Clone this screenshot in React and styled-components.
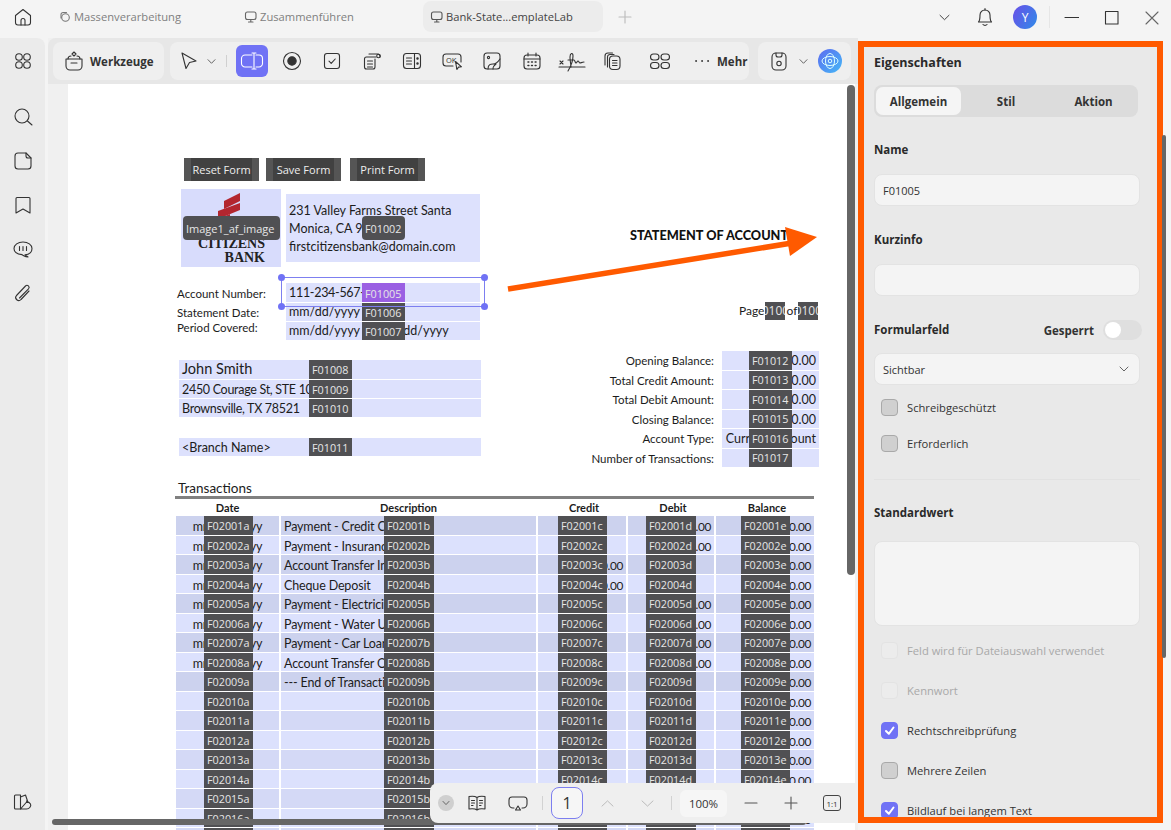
import React from "react";
import styled, { createGlobalStyle } from "styled-components";

const GlobalStyle = createGlobalStyle`
  html, body { margin: 0; padding: 0; background: #f4f4f4; }
  * { box-sizing: border-box; }
`;

const uiFont = `"Open Sans", "Noto Sans", sans-serif`;
const docFont = `Lato, "Noto Sans", sans-serif`;

const Window = styled.div`
  width: 1171px;
  height: 830px;
  display: flex;
  flex-direction: column;
  overflow: hidden;
  background: #f4f4f4;
  font-family: ${uiFont};
  color: #333;
`;

const TopBar = styled.header`
  height: 38px;
  flex: none;
  display: flex;
  align-items: flex-start;
`;

const HomeSlot = styled.div`
  width: 45px;
  height: 34px;
  display: flex;
  align-items: center;
  justify-content: center;
`;

const Tab = styled.div`
  width: ${(p) => p.$w}px;
  height: 31px;
  margin-top: 1px;
  margin-left: ${(p) => p.$ml || 0}px;
  padding-left: 7px;
  display: flex;
  align-items: center;
  gap: 3px;
  border-radius: 8px;
  font-size: 11.2px;
  color: ${(p) => (p.$active ? "#444" : "#808080")};
  background: ${(p) => (p.$active ? "#ececec" : "transparent")};
`;

const TopRight = styled.div`
  height: 34px;
  flex: 1;
  display: flex;
  align-items: center;
  position: relative;
`;

const TopIcon = styled.div`
  margin-left: ${(p) => p.$ml}px;
  display: flex;
  align-items: center;
`;

const Avatar = styled.div`
  width: 24px;
  height: 24px;
  margin-left: ${(p) => p.$ml}px;
  border-radius: 50%;
  display: flex;
  align-items: center;
  justify-content: center;
  color: #fff;
  font-size: 12px;
  background: linear-gradient(120deg, #6a4fe8, #2f8be8);
`;

const TopDivider = styled.div`
  width: 1px;
  height: 22px;
  margin-left: 12px;
  background: #e6e6e6;
`;

const Body = styled.div`
  flex: 1;
  min-height: 0;
  display: flex;
`;

const Sidebar = styled.nav`
  width: 45px;
  flex: none;
  border-top-right-radius: 8px;
  background: #ebebeb;
  display: flex;
  flex-direction: column;
  align-items: center;
  padding: 13px 0 18px;
`;

const SideIcon = styled.div`
  height: 20px;
  margin-bottom: ${(p) => p.$mb || 24}px;
  display: flex;
  align-items: center;
  &:last-child {
    margin-top: auto;
    margin-bottom: 0;
  }
`;

const Main = styled.main`
  width: 810px;
  margin-left: 3px;
  flex: none;
  position: relative;
  display: flex;
  flex-direction: column;
  background: #f0f0f0;
  overflow: hidden;
`;

const ToolRow = styled.div`
  height: 46px;
  flex: none;
  padding: 4px 0 4px 5px;
  display: flex;
  gap: 6px;
  background: #e7e7e7;
  border-top-left-radius: 8px;
`;

const ToolGroup = styled.div`
  width: ${(p) => p.$w}px;
  margin-left: ${(p) => p.$ml || 0}px;
  height: 38px;
  flex: none;
  display: flex;
  align-items: center;
  border-radius: 8px;
  background: #efefef;
  position: relative;
`;

const ToolLabel = styled.span`
  font-size: 11.5px;
  font-weight: 700;
  color: #333;
  white-space: nowrap;
`;

const ToolButton = styled.div`
  width: 32px;
  height: 32px;
  flex: none;
  margin-left: ${(p) => p.$ml}px;
  display: flex;
  align-items: center;
  justify-content: center;
  border-radius: 6px;
  background: ${(p) => (p.$active ? "#7072f5" : "transparent")};
`;

const ToolDivider = styled.div`
  width: 1px;
  height: 12px;
  margin-left: ${(p) => p.$ml}px;
  background: #d0d0d0;
`;

const PageArea = styled.div`
  flex: 1;
  min-height: 0;
  padding-left: 20px;
  padding-right: 3px;
`;

const Page = styled.div`
  height: 100%;
  padding: 74px 0 0 108px;
  background: #fff;
  font-family: ${docFont};
  font-size: 12.5px;
  color: #1c1c1c;
  overflow: hidden;
  position: relative;
`;

const FormButtons = styled.div`
  display: flex;
  margin-left: 8px;
`;

const FormButton = styled.div`
  width: 75px;
  height: 23px;
  margin-right: ${(p) => p.$mr}px;
  display: flex;
  align-items: center;
  justify-content: center;
  background: linear-gradient(90deg, #555 0 7px, #414141 7px 68px, #555 68px);
  color: #eee;
  font-family: ${uiFont};
  font-size: 11px;
`;

const HeaderRow = styled.div`
  display: flex;
  margin: 8px 0 0 5px;
  height: 78px;
`;

const Field = styled.div`
  background: #dde1fd;
  position: relative;
  white-space: nowrap;
  letter-spacing: ${(p) => (p.$tight ? "-0.3px" : "normal")};
`;

const LogoField = styled(Field)`
  width: 100px;
  height: 78px;
  flex: none;
  display: flex;
  flex-direction: column;
  align-items: flex-end;
  padding: 3px 0 0;
  background: #d8dcfc;
`;

const LogoMark = styled.svg`
  position: absolute;
  left: 29px;
  top: 3px;
`;

const LogoText = styled.div`
  font-family: "Liberation Serif", serif;
  font-weight: 700;
  font-size: ${(p) => p.$size}px;
  line-height: 14px;
  color: #222;
  margin-top: ${(p) => p.$mt || 0}px;
  padding-right: ${(p) => p.$pr}px;
`;

const AddressField = styled(Field)`
  width: 194px;
  height: 68px;
  margin: 5px 0 0 5px;
  padding: 8px 0 0 3px;
  line-height: 18px;
`;

const StatementTitle = styled.div`
  margin: 38px 0 0 150px;
  font-size: 12.7px;
  line-height: 16px;
  font-weight: 900;
  color: #111;
  white-space: nowrap;
`;

const AccountRow = styled.div`
  margin-top: 16px;
  display: flex;
`;

const AccountLabels = styled.div`
  width: 110px;
  padding-left: 1px;
  display: grid;
  grid-template-rows: 20px 19px 18px;
  font-size: 11.5px;
  align-items: center;
`;

const AccountLabel = styled.div`
  margin-top: ${(p) => p.$mt || 0}px;
`;

const AccountFields = styled.div`
  width: 194px;
  display: flex;
  flex-direction: column;
  gap: 1px;
  position: relative;
`;

const AccountField = styled(Field)`
  height: ${(p) => p.$h}px;
  line-height: ${(p) => p.$h}px;
  padding-left: 3px;
`;

const Tag = styled.div`
  position: absolute;
  left: ${(p) => p.$left}px;
  top: ${(p) => p.$top ?? 0}px;
  bottom: ${(p) => (p.$tall ? "auto" : "0")};
  width: ${(p) => p.$w || 43}px;
  height: ${(p) => (p.$tall ? `${p.$tall}px` : "auto")};
  padding: 1px 0 0 3px;
  display: flex;
  align-items: center;
  overflow: hidden;
  font-family: ${uiFont};
  font-size: ${(p) => p.$size || 10.8}px;
  letter-spacing: normal;
  color: #e6e6e6;
  background: ${(p) => (p.$selected ? "#9a5fe3" : "#505053")};
  border-radius: ${(p) => p.$radius || 0}px;
`;

const SelectionBox = styled.div`
  position: absolute;
  left: -5px;
  top: -6px;
  width: 204px;
  height: 30px;
  border: 1.5px solid #7d7ff0;
  pointer-events: none;
`;

const Handle = styled.span`
  position: absolute;
  width: 7px;
  height: 7px;
  border-radius: 50%;
  background: #7072f5;
  left: ${(p) => (p.$right ? "auto" : "-4px")};
  right: ${(p) => (p.$right ? "-4px" : "auto")};
  top: ${(p) => (p.$bottom ? "auto" : "-4px")};
  bottom: ${(p) => (p.$bottom ? "-4px" : "auto")};
`;

const PageInfo = styled.div`
  margin: 19px 0 0 259px;
  height: 18px;
  display: flex;
  align-items: center;
  font-size: 12px;
  line-height: 18px;
`;

const PageNumber = styled.div`
  width: 20px;
  height: 18px;
  margin: 0 1px;
  background: #505053;
  color: #e6e6e6;
  overflow: hidden;
  display: flex;
  justify-content: center;
  font-family: ${uiFont};
  font-size: 12px;
`;

const SummaryRow = styled.div`
  margin-top: 11px;
  display: flex;
`;

const CustomerBlock = styled.div`
  width: 302px;
  margin: 9px 0 0 3px;
  flex: none;
`;

const CustomerField = styled(Field)`
  height: ${(p) => p.$h || 19}px;
  line-height: ${(p) => p.$lh || (p.$h || 19) + 1}px;
  margin-top: ${(p) => p.$mt || 0}px;
  margin-bottom: 1px;
  padding-left: 3px;
  font-size: ${(p) => p.$size || 12.5}px;
`;

const BalanceBlock = styled.div`
  flex: 1;
  display: flex;
  flex-direction: column;
`;

const BalanceRow = styled.div`
  height: 19.5px;
  display: flex;
`;

const BalanceLabel = styled.div`
  width: 233px;
  line-height: 19px;
  font-size: 11.5px;
  text-align: right;
`;

const BalanceValue = styled(Field)`
  width: 97px;
  height: 18.5px;
  margin-left: 8px;
  line-height: 20.5px;
  padding-right: 3px;
  text-align: right;
`;

const TableTitle = styled.div`
  margin: 13px 0 0 2px;
  font-size: 13.5px;
  line-height: 15px;
`;

const TableRule = styled.div`
  width: 639px;
  height: 3px;
  margin-left: -1px;
  background: #808080;
`;

const TableHead = styled.div`
  height: 17px;
  padding-left: ${(p) => p.$shift}px;
  font-size: 11px;
  font-weight: 700;
  line-height: 17px;
  text-align: center;
`;

const TableGrid = styled.div`
  width: 638px;
  display: grid;
  grid-template-columns: 103px 255px 88px 86px 98px;
  column-gap: 2px;
`;

const shades = ["#dce1fd", "#ccd2ee", "#d4d9f6"];

const Cell = styled.div`
  height: 19.5px;
  line-height: 21px;
  border-bottom: 1px solid #fff;
  position: relative;
  white-space: nowrap;
  padding: 0 3px;
  font-size: ${(p) => (p.$align === "right" ? 11.8 : 12.5)}px;
  letter-spacing: ${(p) => (p.$align === "right" ? -0.3 : -0.15)}px;
  text-align: ${(p) => p.$align || "left"};
  background: ${(p) => shades[p.$shade]};
`;

const VerticalScroll = styled.div`
  position: absolute;
  left: 799px;
  top: 47px;
  width: 8px;
  height: 490px;
  border-radius: 4px;
  background: #666;
`;

const HorizontalScroll = styled.div`
  position: absolute;
  left: 4px;
  bottom: 5px;
  width: 754px;
  height: 6px;
  border-radius: 3px;
  background: #666;
`;

const ZoomBar = styled.div`
  position: absolute;
  left: 382px;
  bottom: 7px;
  width: 428px;
  height: 40px;
  display: flex;
  align-items: center;
  background: #efefef;
  border-radius: 8px 0 0 8px;
  font-size: 12px;
`;

const ZoomItem = styled.div`
  width: ${(p) => p.$w || 20}px;
  margin-left: ${(p) => p.$ml}px;
  flex: none;
  display: flex;
  align-items: center;
  justify-content: center;
`;

const CircleButton = styled(ZoomItem)`
  height: 16px;
  border-radius: 50%;
  background: #cfcfcf;
`;

const PageInput = styled(ZoomItem)`
  height: 32px;
  border: 1px solid #7d7ff0;
  border-radius: 8px;
  background: #f6f6f6;
  font-size: 16px;
`;

const ZoomValue = styled(ZoomItem)`
  height: 27px;
  border-radius: 6px;
  background: #f6f6f6;
  font-size: 11.5px;
`;

const RatioButton = styled(ZoomItem)`
  height: 16px;
  border: 1px solid #444;
  border-radius: 3px;
  font-size: 8px;
`;

const Separator = styled.div`
  width: 1px;
  height: 14px;
  margin-left: ${(p) => p.$ml}px;
  flex: none;
  background: #d2d2d2;
`;

const Arrow = styled.svg`
  position: absolute;
  left: 412px;
  top: 190px;
  overflow: visible;
  pointer-events: none;
`;

const PanelSlot = styled.aside`
  flex: 1;
  position: relative;
  padding-top: 3px;
  background: #f4f4f4;
`;

const Panel = styled.div`
  width: 305px;
  height: 782px;
  border: 6px solid #ff5a00;
  background: #e9e9e9;
  overflow: hidden;
  padding: 0 16px 0 10px;
`;

const PanelScroll = styled.div`
  position: absolute;
  left: 304px;
  top: 97px;
  width: 4px;
  height: 523px;
  background: #666;
  border-radius: 2px;
`;

const PanelTitle = styled.h2`
  margin: 7px 0 0;
  font-size: 12.5px;
  line-height: 17px;
  font-weight: 700;
  color: #2a2a2a;
`;

const Tabs = styled.div`
  width: 264px;
  height: 32px;
  margin-top: 14px;
  padding: 2px;
  display: grid;
  grid-template-columns: 85px 90px 85px;
  border-radius: 8px;
  background: #dcdcdc;
`;

const TabItem = styled.div`
  display: flex;
  align-items: center;
  justify-content: center;
  font-size: 11.5px;
  font-weight: 700;
  border-radius: 7px;
  background: ${(p) => (p.$active ? "#f5f5f5" : "transparent")};
`;

const FieldLabel = styled.div`
  margin-top: ${(p) => p.$mt}px;
  font-size: 11.5px;
  line-height: 16px;
  font-weight: 700;
  color: #2a2a2a;
`;

const InputBox = styled.div`
  width: 266px;
  height: ${(p) => p.$h || 32}px;
  margin-top: ${(p) => p.$mt}px;
  padding: 0 10px 0 8px;
  display: flex;
  align-items: center;
  justify-content: space-between;
  font-size: 11px;
  background: #f4f4f4;
  border: 1px solid #e3e3e3;
  border-radius: 8px;
`;

const FormHead = styled.div`
  width: 268px;
  margin-top: 24px;
  height: 20px;
  display: flex;
  align-items: center;
`;

const LockLabel = styled.span`
  margin-left: auto;
  margin-right: 9px;
  font-size: 11.5px;
  font-weight: 700;
`;

const Toggle = styled.div`
  width: 39px;
  height: 20px;
  padding: 2px;
  border-radius: 10px;
  background: #dfdfdf;
`;

const Knob = styled.div`
  width: 16px;
  height: 16px;
  border-radius: 50%;
  background: #fff;
`;

const CheckRow = styled.div`
  height: 18px;
  margin-top: ${(p) => p.$mt}px;
  padding-left: 7px;
  display: flex;
  align-items: center;
  gap: 9px;
  font-size: 11.2px;
  white-space: nowrap;
  color: ${(p) => (p.$disabled ? "#a8a8a8" : "#333")};
`;

const Box = styled.span`
  width: 17px;
  height: 17px;
  flex: none;
  display: flex;
  align-items: center;
  justify-content: center;
  border-radius: 4px;
  border: 1px solid ${(p) => (p.$checked ? "#7072f5" : p.$disabled ? "#e3e3e3" : "#a9a9a9")};
  background: ${(p) => (p.$checked ? "#7072f5" : p.$disabled ? "#ececec" : "#d0d0d0")};
`;

const Divider = styled.div`
  width: 266px;
  height: 1px;
  margin-top: 27px;
  background: #e2e2e2;
`;

const Icon = ({ size = 20, w, h, color = "#333", sw = 1.1, children }) => (
  <svg
    width={w || size}
    height={h || size}
    viewBox={`0 0 ${w || size} ${h || size}`}
    fill="none"
    stroke={color}
    strokeWidth={sw}
    strokeLinecap="round"
    strokeLinejoin="round"
  >
    {children}
  </svg>
);

const Chevron = ({ up, size = 9, color = "#666" }) => (
  <Icon size={size} color={color} sw={1}>
    <path
      d={
        up
          ? `M1 ${size * 0.7}L${size / 2} ${size * 0.3}L${size - 1} ${size * 0.7}`
          : `M1 ${size * 0.3}L${size / 2} ${size * 0.7}L${size - 1} ${size * 0.3}`
      }
    />
  </Icon>
);

const GridIcon = ({ wide }) => (
  <Icon w={wide ? 22 : 18} h={18}>
    {wide ? (
      <>
        <rect x="1.5" y="2" width="8.5" height="6" rx="3" />
        <rect x="12" y="2" width="8.5" height="6" rx="3" />
        <rect x="1.5" y="10.5" width="8.5" height="6" rx="3" />
        <rect x="12" y="10.5" width="8.5" height="6" rx="3" />
      </>
    ) : (
      <>
        <circle cx="5" cy="5" r="3.3" />
        <circle cx="13" cy="5" r="3.3" />
        <circle cx="5" cy="13" r="3.3" />
        <circle cx="13" cy="13" r="3.3" />
      </>
    )}
  </Icon>
);

const toolIcons = [
  {
    ml: 8,
    node: (
      <Icon>
        <circle cx="10" cy="10" r="8.5" />
        <circle cx="10" cy="10" r="4.2" fill="#333" />
      </Icon>
    ),
  },
  {
    ml: 8,
    node: (
      <Icon>
        <rect x="2.5" y="2.5" width="15" height="15" rx="2.5" />
        <path d="M7 10.2l2.2 2.2L13.2 8" />
      </Icon>
    ),
  },
  {
    ml: 8,
    node: (
      <Icon>
        <path d="M14 6H4.5A2 2 0 0 0 2.5 8v8a2 2 0 0 0 2 2H11a2 2 0 0 0 2-2V8" />
        <path d="M7 3h9a2.5 2.5 0 0 1 2 3" />
        <circle cx="16.5" cy="5" r="1.8" />
        <path d="M5.5 10h5M5.5 13h5M5.5 16h5" />
      </Icon>
    ),
  },
  {
    ml: 8,
    node: (
      <Icon>
        <rect x="1.5" y="2.5" width="17" height="15" rx="3" />
        <path d="M12.5 2.5v15M4.5 7h5M4.5 10h5M4.5 13h5" />
        <circle cx="15.5" cy="7.5" r=".7" fill="#333" />
        <circle cx="15.5" cy="12.5" r=".7" fill="#333" />
      </Icon>
    ),
  },
  {
    ml: 8,
    node: (
      <Icon>
        <path d="M11 15H4a3 3 0 0 1-3-3V6a3 3 0 0 1 3-3h12a3 3 0 0 1 3 3v5" />
        <path d="M13.5 10.5l1.4 8 1.6-2.4 3-.3z" />
        <text x="4" y="11.5" fontSize="7.5" fontFamily="Open Sans" stroke="none" fill="#333">
          OK
        </text>
      </Icon>
    ),
  },
  {
    ml: 8,
    node: (
      <Icon>
        <rect x="2" y="2" width="16" height="16" rx="3" />
        <circle cx="6.5" cy="6.5" r="1.1" />
        <path d="M6 18c0-5 3-5 5-5 3 0 5-2 7-5M11 18c0-2 1.5-4 3-5" />
      </Icon>
    ),
  },
  {
    ml: 8,
    node: (
      <Icon>
        <rect x="2" y="4" width="16" height="14" rx="3" />
        <path d="M2 8h16M6 2v3M14 2v3" />
        <path d="M6 11h.8M9.6 11h.8M13.2 11h.8M6 14.5h.8M9.6 14.5h.8M13.2 14.5h.8" strokeWidth="1.6" />
      </Icon>
    ),
  },
  {
    ml: 8,
    node: (
      <Icon w={28} h={22}>
        <path d="M1 17h26" />
        <path d="M2 11l3 3M5 11l-3 3" />
        <path d="M10 21c3-5 5-11 5-15 0-4-3-3-3 1 0 3 1 9 1 10" />
        <path d="M10 10h6c1 0 1 3 2 3s1-2 2-2 1 2 2 2 2-1 4-1" />
      </Icon>
    ),
  },
  {
    ml: 8,
    node: (
      <Icon>
        <path d="M3 14V5a3 3 0 0 1 3-3h4.5" />
        <path d="M5.5 16V6A2.5 2.5 0 0 1 8 3.5h4" />
        <rect x="7.5" y="5" width="10.5" height="13.5" rx="3.5" />
        <path d="M10.5 9.5H15M10.5 12H15M10.5 14.5H15" />
      </Icon>
    ),
  },
  { ml: 16, node: <GridIcon wide /> },
];

const accountRows = [
  { h: 19, text: "111-234-567-890", tag: "F01005", selected: true, tight: true },
  { h: 18, text: "mm/dd/yyyy", tag: "F01006" },
  { h: 18, text: "mm/dd/yyyy to mm/dd/yyyy", tag: "F01007" },
];

const balances = [
  ["Opening Balance:", "1,000.00", "F01012"],
  ["Total Credit Amount:", "1,000.00", "F01013"],
  ["Total Debit Amount:", "1,000.00", "F01014"],
  ["Closing Balance:", "1,000.00", "F01015"],
  ["Account Type:", "Current Account", "F01016"],
  ["Number of Transactions:", "", "F01017"],
];

const descriptions = [
  "Payment - Credit Card",
  "Payment - Insurance",
  "Account Transfer In",
  "Cheque Deposit",
  "Payment - Electricity",
  "Payment - Water Utility",
  "Payment - Car Loan",
  "Account Transfer Out",
  "--- End of Transactions",
];

const tableHeads = [
  ["Date", 0],
  ["Description", 0],
  ["Credit", 4],
  ["Debit", 4],
  ["Balance", 4],
];

const rows = Array.from({ length: 17 }, (_, i) => {
  const used = i < 8;
  const inbound = i === 2 || i === 3;
  return {
    id: String(i + 1).padStart(2, "0"),
    shade: i % 2 === 1 ? 0 : i < 9 ? 1 : 2,
    date: used ? "mm/dd/yyyy" : "",
    desc: descriptions[i] || "",
    credit: inbound ? "1,000.00" : "",
    debit: used && !inbound ? "1,000.00" : "",
    balance: "1,000.00",
  };
});

const Check = () => (
  <Icon size={13} color="#fff" sw={2}>
    <path d="M3 7l2.8 2.8L10.5 3.5" />
  </Icon>
);

const Option = ({ mt, label, checked, disabled }) => (
  <CheckRow $mt={mt} $disabled={disabled}>
    <Box $checked={checked} $disabled={disabled}>
      {checked && <Check />}
    </Box>
    {label}
  </CheckRow>
);

export default function App() {
  return (
    <Window>
      <GlobalStyle />
      <TopBar>
        <HomeSlot>
          <Icon>
            <path d="M2.5 8.5L10 2.5l7.5 6v7a2.5 2.5 0 0 1-2.5 2.5H5a2.5 2.5 0 0 1-2.5-2.5z" />
            <path d="M8 18v-4.5a2 2 0 0 1 4 0V18" />
          </Icon>
        </HomeSlot>
        <Tab $w={170} $ml={6}>
          <Icon size={13} color="#777">
            <circle cx="7.5" cy="7.5" r="3.8" />
            <path d="M3 8V4.5a2 2 0 0 1 2-2h3.5" />
          </Icon>
          Massenverarbeitung
        </Tab>
        <Tab $w={180} $ml={16}>
          <Icon size={13} color="#666">
            <rect x="1.5" y="2" width="10.5" height="7.5" rx="2" />
            <path d="M6.8 9.5V12M4.5 12H9" />
          </Icon>
          Zusammenführen
        </Tab>
        <Tab $w={180} $ml={6} $active>
          <Icon size={13} color="#555">
            <rect x="1.5" y="2" width="10.5" height="7.5" rx="2" />
            <path d="M6.8 9.5V12M4.5 12H9" />
          </Icon>
          Bank-State...emplateLab
        </Tab>
        <TopRight>
          <TopIcon $ml={15}>
            <Icon size={14} color="#bbb">
              <path d="M7 1v12M1 7h12" />
            </Icon>
          </TopIcon>
          <TopIcon $ml={307}>
            <Chevron size={11} color="#444" />
          </TopIcon>
          <TopIcon $ml={25}>
            <Icon size={20}>
              <path d="M3.5 15C5 13.5 5 11.5 5 8a5 5 0 0 1 10 0c0 3.5 0 5.5 1.5 7z" />
              <path d="M8 17.5c1 1.2 3 1.2 4 0M10 1.5V3" />
            </Icon>
          </TopIcon>
          <Avatar $ml={18}>Y</Avatar>
          <TopDivider />
          <TopIcon $ml={14}>
            <Icon size={15}>
              <path d="M1 7.5h14" />
            </Icon>
          </TopIcon>
          <TopIcon $ml={25}>
            <Icon size={15}>
              <rect x="1.5" y="1.5" width="12.5" height="12.5" />
            </Icon>
          </TopIcon>
          <TopIcon $ml={25}>
            <Icon size={15} color="#666">
              <path d="M2 2l12 12M14 2L2 14" />
            </Icon>
          </TopIcon>
        </TopRight>
      </TopBar>
      <Body>
        <Sidebar>
          <SideIcon $mb={36}>
            <GridIcon />
          </SideIcon>
          <SideIcon>
            <Icon>
              <circle cx="9" cy="9" r="7" />
              <path d="M14.5 14l4.5 4" />
            </Icon>
          </SideIcon>
          <SideIcon>
            <Icon>
              <path d="M13 2H5a3 3 0 0 0-3 3v10a3 3 0 0 0 3 3h10a3 3 0 0 0 3-3V7z" />
              <path d="M13 2v3a2 2 0 0 0 2 2h3" />
            </Icon>
          </SideIcon>
          <SideIcon>
            <Icon>
              <path d="M4 2.5h12a1 1 0 0 1 1 1V18l-7-4-7 4V3.5a1 1 0 0 1 1-1z" />
            </Icon>
          </SideIcon>
          <SideIcon>
            <Icon>
              <path d="M10 3c5 0 9 2.8 9 6.5 0 3.7-3 6-7 6.2l3 2.3c-2-.3-5-1.2-6-2.4-4-.4-8-2.4-8-6.1C1 5.8 5 3 10 3z" />
              <path d="M6.5 7.5v4M10 7.5v4M13.5 7.5v4" />
            </Icon>
          </SideIcon>
          <SideIcon>
            <Icon>
              <path d="M17 7l-8 8.5a3 3 0 0 1-4.5-4l9-9.5a2 2 0 0 1 3 2.8L7.5 14" transform="translate(-1 1)" />
            </Icon>
          </SideIcon>
          <SideIcon>
            <Icon>
              <path d="M2.5 3h5v14h-5a1 1 0 0 1-1-1V4a1 1 0 0 1 1-1z" />
              <path d="M7.5 5l5-2 2 6-7 8M7.5 17h6c3 0 5-3 4-5-1-1.5-3-2.5-4-3" />
            </Icon>
          </SideIcon>
        </Sidebar>
        <Main>
          <ToolRow>
            <ToolGroup $w={111}>
              <ToolButton $ml={5}>
                <Icon size={22}>
                  <path d="M3 9h16v7a4 4 0 0 1-4 4H7a4 4 0 0 1-4-4z" />
                  <path d="M8 13h6M5 9c0-2 1-3 3-3M17 9c0-2-1-3-3-3" />
                  <path d="M11 2l2 2-2 2-2-2z" />
                </Icon>
              </ToolButton>
              <ToolLabel>Werkzeuge</ToolLabel>
            </ToolGroup>
            <ToolGroup $w={579}>
              <ToolButton $ml={3}>
                <Icon>
                  <path d="M3 2l14 8-6.5 1.5L7 17.5z" />
                </Icon>
              </ToolButton>
              <TopIcon $ml={2}>
                <Chevron />
              </TopIcon>
              <ToolDivider $ml={10} />
              <ToolButton $ml={9} $active>
                <Icon size={24} color="#fff">
                  <path d="M12 6H5a3.5 3.5 0 0 0-3.5 3.5v5A3.5 3.5 0 0 0 5 18h7" />
                  <path d="M16 6h3a3.5 3.5 0 0 1 3.5 3.5v5A3.5 3.5 0 0 1 19 18h-3" />
                  <path d="M14 4v16M12 4h4M12 20h4" />
                </Icon>
              </ToolButton>
              {toolIcons.map((tool, i) => (
                <ToolButton key={i} $ml={tool.ml}>
                  {tool.node}
                </ToolButton>
              ))}
              <TopIcon $ml={18}>
                <Icon w={16} h={4} color="#444" sw={1.8}>
                  <path d="M2 2h.2M8 2h.2M14 2h.2" />
                </Icon>
              </TopIcon>
              <TopIcon $ml={7}>
                <ToolLabel>Mehr</ToolLabel>
              </TopIcon>
            </ToolGroup>
            <ToolGroup $w={93} $ml={3}>
              <ToolButton $ml={5}>
                <Icon>
                  <rect x="3" y="2" width="14" height="17" rx="4" />
                  <path d="M7 2v2a2 2 0 0 0 2 2h2a2 2 0 0 0 2-2V2" />
                  <circle cx="10" cy="12.5" r="2.2" />
                </Icon>
              </ToolButton>
              <TopIcon $ml={4}>
                <Chevron />
              </TopIcon>
              <TopIcon $ml={10}>
                <svg width="24" height="24" viewBox="0 0 24 24" fill="none">
                  <defs>
                    <linearGradient id="ai" x1="0" y1="0" x2="1" y2="1">
                      <stop offset="0" stopColor="#5d6cf0" />
                      <stop offset="1" stopColor="#45b8f7" />
                    </linearGradient>
                  </defs>
                  <circle cx="12" cy="12" r="12" fill="url(#ai)" />
                  <ellipse cx="12" cy="12" rx="8" ry="4.5" stroke="#dff" strokeWidth="1" />
                  <ellipse cx="12" cy="12" rx="4.5" ry="7.5" stroke="#dff" strokeWidth="1" />
                  <circle cx="12" cy="12" r="1.8" stroke="#dff" strokeWidth="1" />
                </svg>
              </TopIcon>
            </ToolGroup>
          </ToolRow>
          <PageArea>
            <Page>
              <FormButtons>
                <FormButton $mr={7}>Reset Form</FormButton>
                <FormButton $mr={9}>Save Form</FormButton>
                <FormButton $mr={0}>Print Form</FormButton>
              </FormButtons>
              <HeaderRow>
                <LogoField>
                  <LogoMark width="32" height="36" viewBox="0 0 32 36">
                    <path d="M14 9L30 1v8L14 17z" fill="#b3262f" />
                    <path d="M8 19l22-8v7L8 27z" fill="#b3262f" />
                    <path d="M3 29l17-7v6L3 35z" fill="#b3262f" />
                  </LogoMark>
                  <LogoText $size={14} $mt={45} $pr={16}>CITIZENS</LogoText>
                  <LogoText $size={14} $pr={16}>BANK</LogoText>
                  <Tag $left={2} $top={27} $tall={24} $w={97} $radius={4} $size={11}>
                    Image1_af_image
                  </Tag>
                </LogoField>
                <AddressField>
                  <div>231 Valley Farms Street Santa</div>
                  <div>Monica, CA 90401</div>
                  <div>firstcitizensbank@domain.com</div>
                  <Tag $left={76} $top={22} $tall={24} $radius={4}>F01002</Tag>
                </AddressField>
                <StatementTitle>STATEMENT OF ACCOUNT</StatementTitle>
              </HeaderRow>
              <AccountRow>
                <AccountLabels>
                  <AccountLabel>Account Number:</AccountLabel>
                  <AccountLabel>Statement Date:</AccountLabel>
                  <AccountLabel $mt={-8}>Period Covered:</AccountLabel>
                </AccountLabels>
                <AccountFields>
                  {accountRows.map((row) => (
                    <AccountField key={row.tag} $h={row.h} $tight={row.tight}>
                      {row.text}
                      <Tag $left={76} $selected={row.selected}>{row.tag}</Tag>
                    </AccountField>
                  ))}
                  <SelectionBox>
                    <Handle />
                    <Handle $right />
                    <Handle $bottom />
                    <Handle $right $bottom />
                  </SelectionBox>
                </AccountFields>
                <PageInfo>
                  Page<PageNumber>0100</PageNumber>of<PageNumber>0100</PageNumber>
                </PageInfo>
              </AccountRow>
              <SummaryRow>
                <CustomerBlock>
                  <CustomerField $size={14.5} $lh={18}>
                    John Smith<Tag $left={130}>F01008</Tag>
                  </CustomerField>
                  <CustomerField $h={18} $tight>
                    2450 Courage St, STE 108<Tag $left={130}>F01009</Tag>
                  </CustomerField>
                  <CustomerField $h={18} $tight>
                    Brownsville, TX 78521<Tag $left={130}>F01010</Tag>
                  </CustomerField>
                  <CustomerField $h={18} $mt={21}>
                    {"<Branch Name>"}<Tag $left={130}>F01011</Tag>
                  </CustomerField>
                </CustomerBlock>
                <BalanceBlock>
                  {balances.map(([label, value, tag]) => (
                    <BalanceRow key={tag}>
                      <BalanceLabel>{label}</BalanceLabel>
                      <BalanceValue>
                        {value}
                        <Tag $left={27}>{tag}</Tag>
                      </BalanceValue>
                    </BalanceRow>
                  ))}
                </BalanceBlock>
              </SummaryRow>
              <TableTitle>Transactions</TableTitle>
              <TableRule />
              <TableGrid>
                {tableHeads.map(([head, shift]) => (
                  <TableHead key={head} $shift={shift}>{head}</TableHead>
                ))}
                {rows.map((row) => (
                  <React.Fragment key={row.id}>
                    <Cell $shade={row.shade} $align="center">
                      {row.date}
                      <Tag $left={28} $w={49}>{`F020${row.id}a`}</Tag>
                    </Cell>
                    <Cell $shade={row.shade}>
                      {row.desc}
                      <Tag $left={103} $w={50}>{`F020${row.id}b`}</Tag>
                    </Cell>
                    <Cell $shade={row.shade} $align="right">
                      {row.credit}
                      <Tag $left={20} $w={49}>{`F020${row.id}c`}</Tag>
                    </Cell>
                    <Cell $shade={row.shade} $align="right">
                      {row.debit}
                      <Tag $left={18} $w={50}>{`F020${row.id}d`}</Tag>
                    </Cell>
                    <Cell $shade={row.shade} $align="right">
                      {row.balance}
                      <Tag $left={25} $w={49}>{`F020${row.id}e`}</Tag>
                    </Cell>
                  </React.Fragment>
                ))}
              </TableGrid>
            </Page>
          </PageArea>
          <VerticalScroll />
          <HorizontalScroll />
          <Arrow width="370" height="70" viewBox="0 0 370 70">
            <path d="M48 61L332 15" stroke="#ff5a00" strokeWidth="5.5" />
            <path d="M357 9L325 -1L330 28z" fill="#ff5a00" />
          </Arrow>
          <ZoomBar>
            <CircleButton $ml={8} $w={16}>
              <Chevron size={8} />
            </CircleButton>
            <ZoomItem $ml={13}>
              <Icon>
                <path d="M10 4.5C8 3 5 3 2 3.5V16c3-.5 6-.5 8 1 2-1.5 5-1.5 8-1V3.5C15 3 12 3 10 4.5zM10 4.5V17" />
                <path d="M4.5 7.5h3M4.5 10h3M4.5 12.5H6M12.5 7.5h3M12.5 10h3M12.5 12.5H14" />
              </Icon>
            </ZoomItem>
            <ZoomItem $ml={21}>
              <Icon w={20} h={18}>
                <path d="M6 14H5a4 4 0 0 1-4-4V6a3 3 0 0 1 3-3h12a3 3 0 0 1 3 3v4a4 4 0 0 1-4 4h-1" />
                <path d="M10 12l2.5 4h-5z" />
              </Icon>
            </ZoomItem>
            <Separator $ml={14} />
            <PageInput $ml={8} $w={32}>1</PageInput>
            <ZoomItem $ml={14}>
              <Chevron size={13} up color="#bbb" />
            </ZoomItem>
            <ZoomItem $ml={20}>
              <Chevron size={13} color="#bbb" />
            </ZoomItem>
            <Separator $ml={14} />
            <ZoomValue $ml={8} $w={47}>100%</ZoomValue>
            <ZoomItem $ml={14}>
              <Icon size={14} color="#555">
                <path d="M1 7h12" />
              </Icon>
            </ZoomItem>
            <ZoomItem $ml={20}>
              <Icon size={14} color="#555">
                <path d="M1 7h12M7 1v12" />
              </Icon>
            </ZoomItem>
            <RatioButton $ml={22} $w={18}>1:1</RatioButton>
          </ZoomBar>
        </Main>
        <PanelSlot>
          <Panel>
            <PanelTitle>Eigenschaften</PanelTitle>
            <Tabs>
              <TabItem $active>Allgemein</TabItem>
              <TabItem>Stil</TabItem>
              <TabItem>Aktion</TabItem>
            </Tabs>
            <FieldLabel $mt={25}>Name</FieldLabel>
            <InputBox $mt={16}>F01005</InputBox>
            <FieldLabel $mt={26}>Kurzinfo</FieldLabel>
            <InputBox $mt={16} />
            <FormHead>
              <FieldLabel $mt={0}>Formularfeld</FieldLabel>
              <LockLabel>Gesperrt</LockLabel>
              <Toggle>
                <Knob />
              </Toggle>
            </FormHead>
            <InputBox $mt={13}>
              Sichtbar
              <Chevron size={10} />
            </InputBox>
            <Option mt={13} label="Schreibgeschützt" />
            <Option mt={18} label="Erforderlich" />
            <Divider />
            <FieldLabel $mt={25}>Standardwert</FieldLabel>
            <InputBox $mt={20} $h={85} />
            <Option mt={15} label="Feld wird für Dateiauswahl verwendet" disabled />
            <Option mt={22} label="Kennwort" disabled />
            <Option mt={22} label="Rechtschreibprüfung" checked />
            <Option mt={22} label="Mehrere Zeilen" />
            <Option mt={22} label="Bildlauf bei langem Text" checked />
          </Panel>
          <PanelScroll />
        </PanelSlot>
      </Body>
    </Window>
  );
}
